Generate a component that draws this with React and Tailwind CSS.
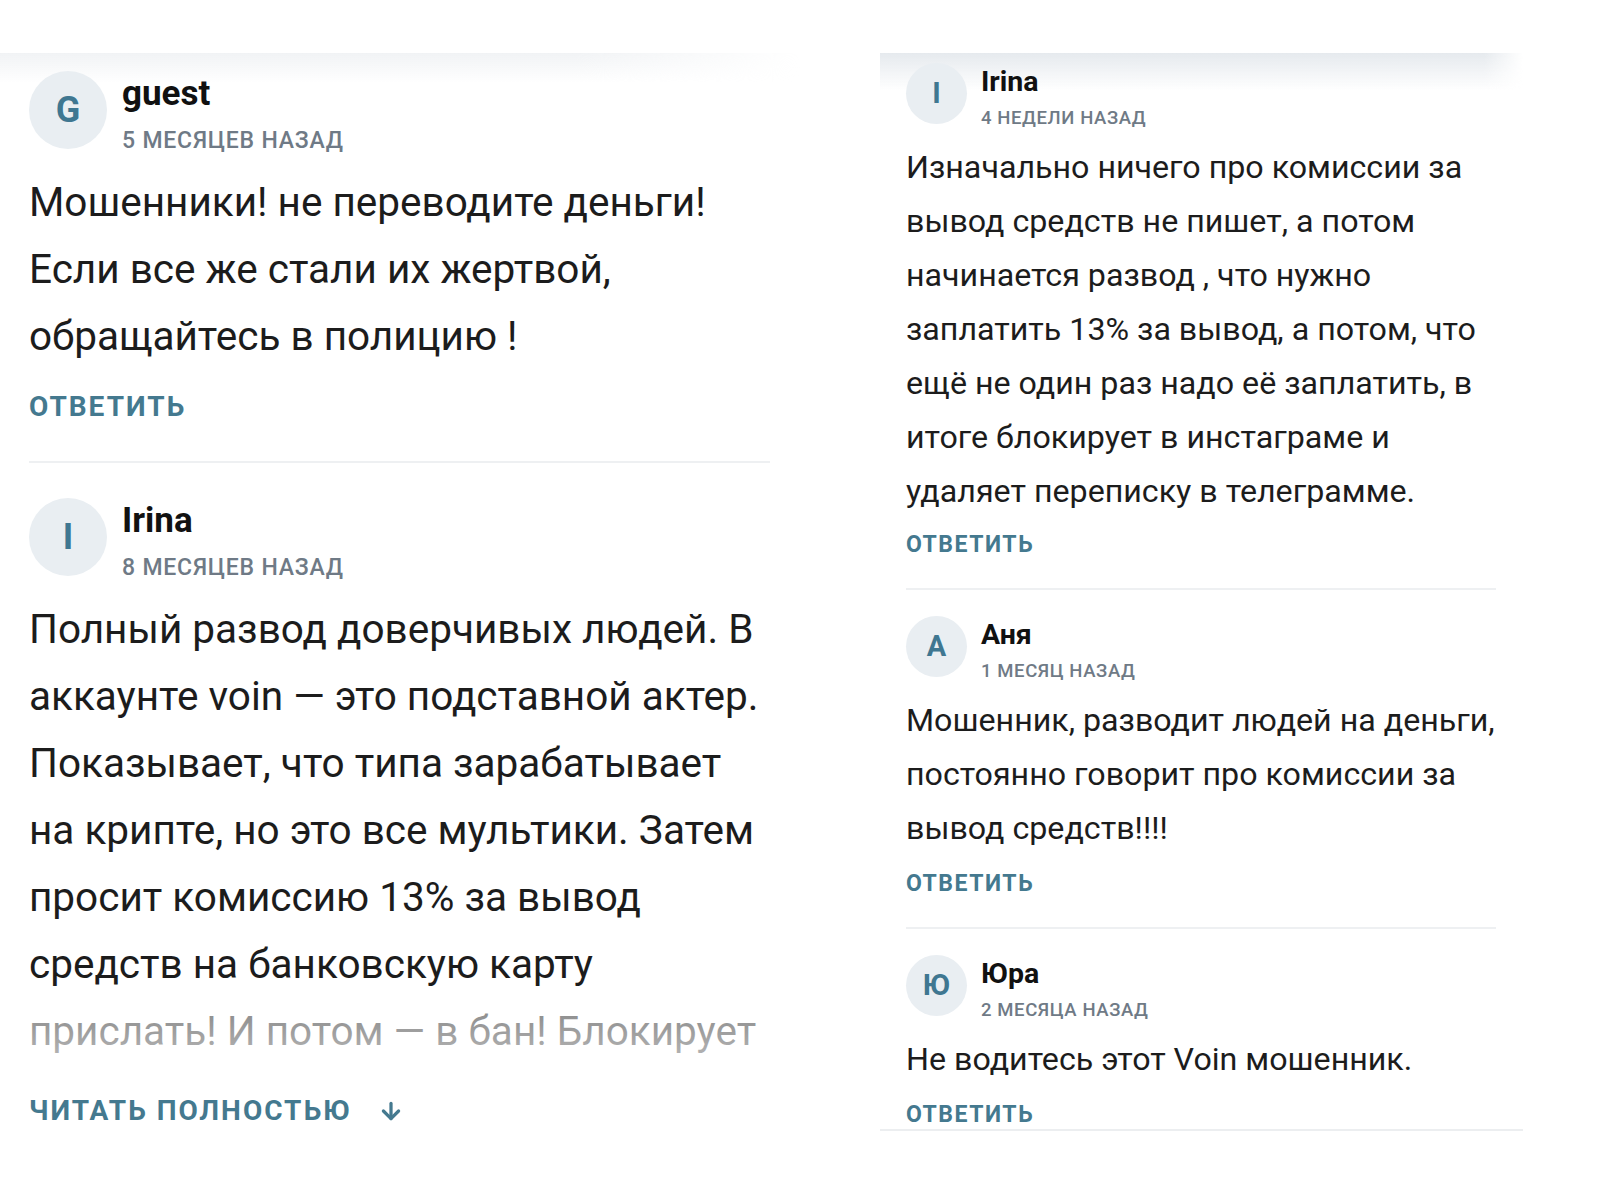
import React from 'react';
import { ArrowDown } from 'lucide-react';

const leftComments = [
  {
    letter: 'G',
    name: 'guest',
    when: '5 месяцев назад',
    lines: ['Мошенники! не переводите деньги!', 'Если все же стали их жертвой,', 'обращайтесь в полицию !'],
  },
];

const longLines = [
  'Полный развод доверчивых людей. В',
  'аккаунте voin — это подставной актер.',
  'Показывает, что типа зарабатывает',
  'на крипте, но это все мультики. Затем',
  'просит комиссию 13% за вывод',
  'средств на банковскую карту',
  'прислать! И потом — в бан! Блокирует',
];

const rightComments = [
  {
    letter: 'I',
    name: 'Irina',
    when: '4 недели назад',
    lines: [
      'Изначально ничего про комиссии за',
      'вывод средств не пишет, а потом',
      'начинается развод , что нужно',
      'заплатить 13% за вывод, а потом, что',
      'ещё не один раз надо её заплатить, в',
      'итоге блокирует в инстаграме и',
      'удаляет переписку в телеграмме.',
    ],
  },
  {
    letter: 'А',
    name: 'Аня',
    when: '1 месяц назад',
    lines: ['Мошенник, разводит людей на деньги,', 'постоянно говорит про комиссии за', 'вывод средств!!!!'],
  },
  {
    letter: 'Ю',
    name: 'Юра',
    when: '2 месяца назад',
    lines: ['Не водитесь этот Voin мошенник.'],
  },
];

function BigHeader({ letter, name, when }) {
  return (
    <div className="flex items-start">
      <div className="w-[78px] h-[78px] shrink-0 rounded-full bg-[#e9eef2] flex items-center justify-center text-[36px] font-bold text-[#3f7791]">
        {letter}
      </div>
      <div className="ml-[15px]">
        <div className="mt-[3px] text-[35px] leading-[40px] font-bold text-[#111]">{name}</div>
        <div className="mt-[13px] text-[23px] leading-[28px] font-medium uppercase tracking-[0.8px] text-[#6f7a86]">{when}</div>
      </div>
    </div>
  );
}

function SmallHeader({ letter, name, when }) {
  return (
    <div className="flex items-start">
      <div className="w-[61px] h-[61px] shrink-0 rounded-full bg-[#e9eef2] flex items-center justify-center text-[29px] font-bold text-[#3f7791]">
        {letter}
      </div>
      <div className="ml-[14px]">
        <div className="mt-[3px] text-[28.5px] leading-[32px] font-bold text-[#111]">{name}</div>
        <div className="mt-[8px] text-[18.5px] leading-[24px] font-medium uppercase tracking-[0.6px] text-[#6f7a86]">{when}</div>
      </div>
    </div>
  );
}

export default function App() {
  return (
    <div className="min-h-[1200px] bg-white text-[#1c1c1c] font-['Roboto','Noto_Sans',sans-serif] flex items-start pt-[53px]">
      {/* left card */}
      <div className="relative w-[800px] shrink-0 pl-[29px] pr-[30px]">
        <div className="pointer-events-none absolute left-0 top-0 w-[800px] h-[30px] bg-gradient-to-b from-[#f1f3f5] to-white/0 [mask-image:linear-gradient(to_right,black_72%,transparent)]" />
        <div className="relative">
          {leftComments.map((c) => (
            <div key={c.name} className="pt-[18px]">
              <BigHeader {...c} />
              <div className="mt-[14px] text-[40.5px] leading-[67px]">
                {c.lines.map((l) => (
                  <div key={l} className="whitespace-nowrap">{l}</div>
                ))}
              </div>
              <div className="mt-[21px] text-[28px] leading-[32px] font-bold uppercase tracking-[2px] text-[#44798f]">Ответить</div>
              <div className="mt-[38px] h-[2px] w-[741px] bg-[#eef0f2]" />
            </div>
          ))}
          <div className="pt-[35px]">
            <BigHeader letter="I" name="Irina" when="8 месяцев назад" />
            <div className="relative mt-[14px] text-[40.5px] leading-[67px]">
              {longLines.map((l) => (
                <div key={l} className="whitespace-nowrap">{l}</div>
              ))}
              <div className="pointer-events-none absolute left-0 right-0 bottom-0 h-[67px] bg-gradient-to-b from-white/45 to-white/70" />
            </div>
            <div className="mt-[30px] flex items-center text-[28px] leading-[32px] font-bold uppercase tracking-[2px] text-[#44798f]">
              <span>Читать полностью</span>
              <ArrowDown className="ml-[26px] w-[26px] h-[26px]" strokeWidth={3} />
            </div>
          </div>
        </div>
      </div>

      {/* right card */}
      <div className="relative ml-[80px] w-[643px] shrink-0">
        <div className="pointer-events-none absolute left-0 top-0 w-[643px] h-[38px] bg-gradient-to-b from-[#e6eaee] to-white/0 [mask-image:linear-gradient(to_right,black_94%,transparent)]" />
        <div className="relative px-[26px]">
          {rightComments.map((c, i) => (
            <div key={c.name} className={i === 0 ? 'pt-[10px]' : 'pt-[26px]'}>
              <SmallHeader {...c} />
              <div className="mt-[10px] text-[32.2px] leading-[54px]">
                {c.lines.map((l) => (
                  <div key={l} className="whitespace-nowrap">{l}</div>
                ))}
              </div>
              <div className={`${i === 0 ? 'mt-[14px]' : 'mt-[16px]'} text-[23px] leading-[26px] font-bold uppercase tracking-[1.5px] text-[#44798f]`}>Ответить</div>
              {i < rightComments.length - 1 && <div className="mt-[30px] h-[2px] w-[590px] bg-[#eef0f2]" />}
            </div>
          ))}
        </div>
        <div className="mt-[1px] h-[2px] w-[643px] bg-[#eceef0]" />
      </div>
    </div>
  );
}
